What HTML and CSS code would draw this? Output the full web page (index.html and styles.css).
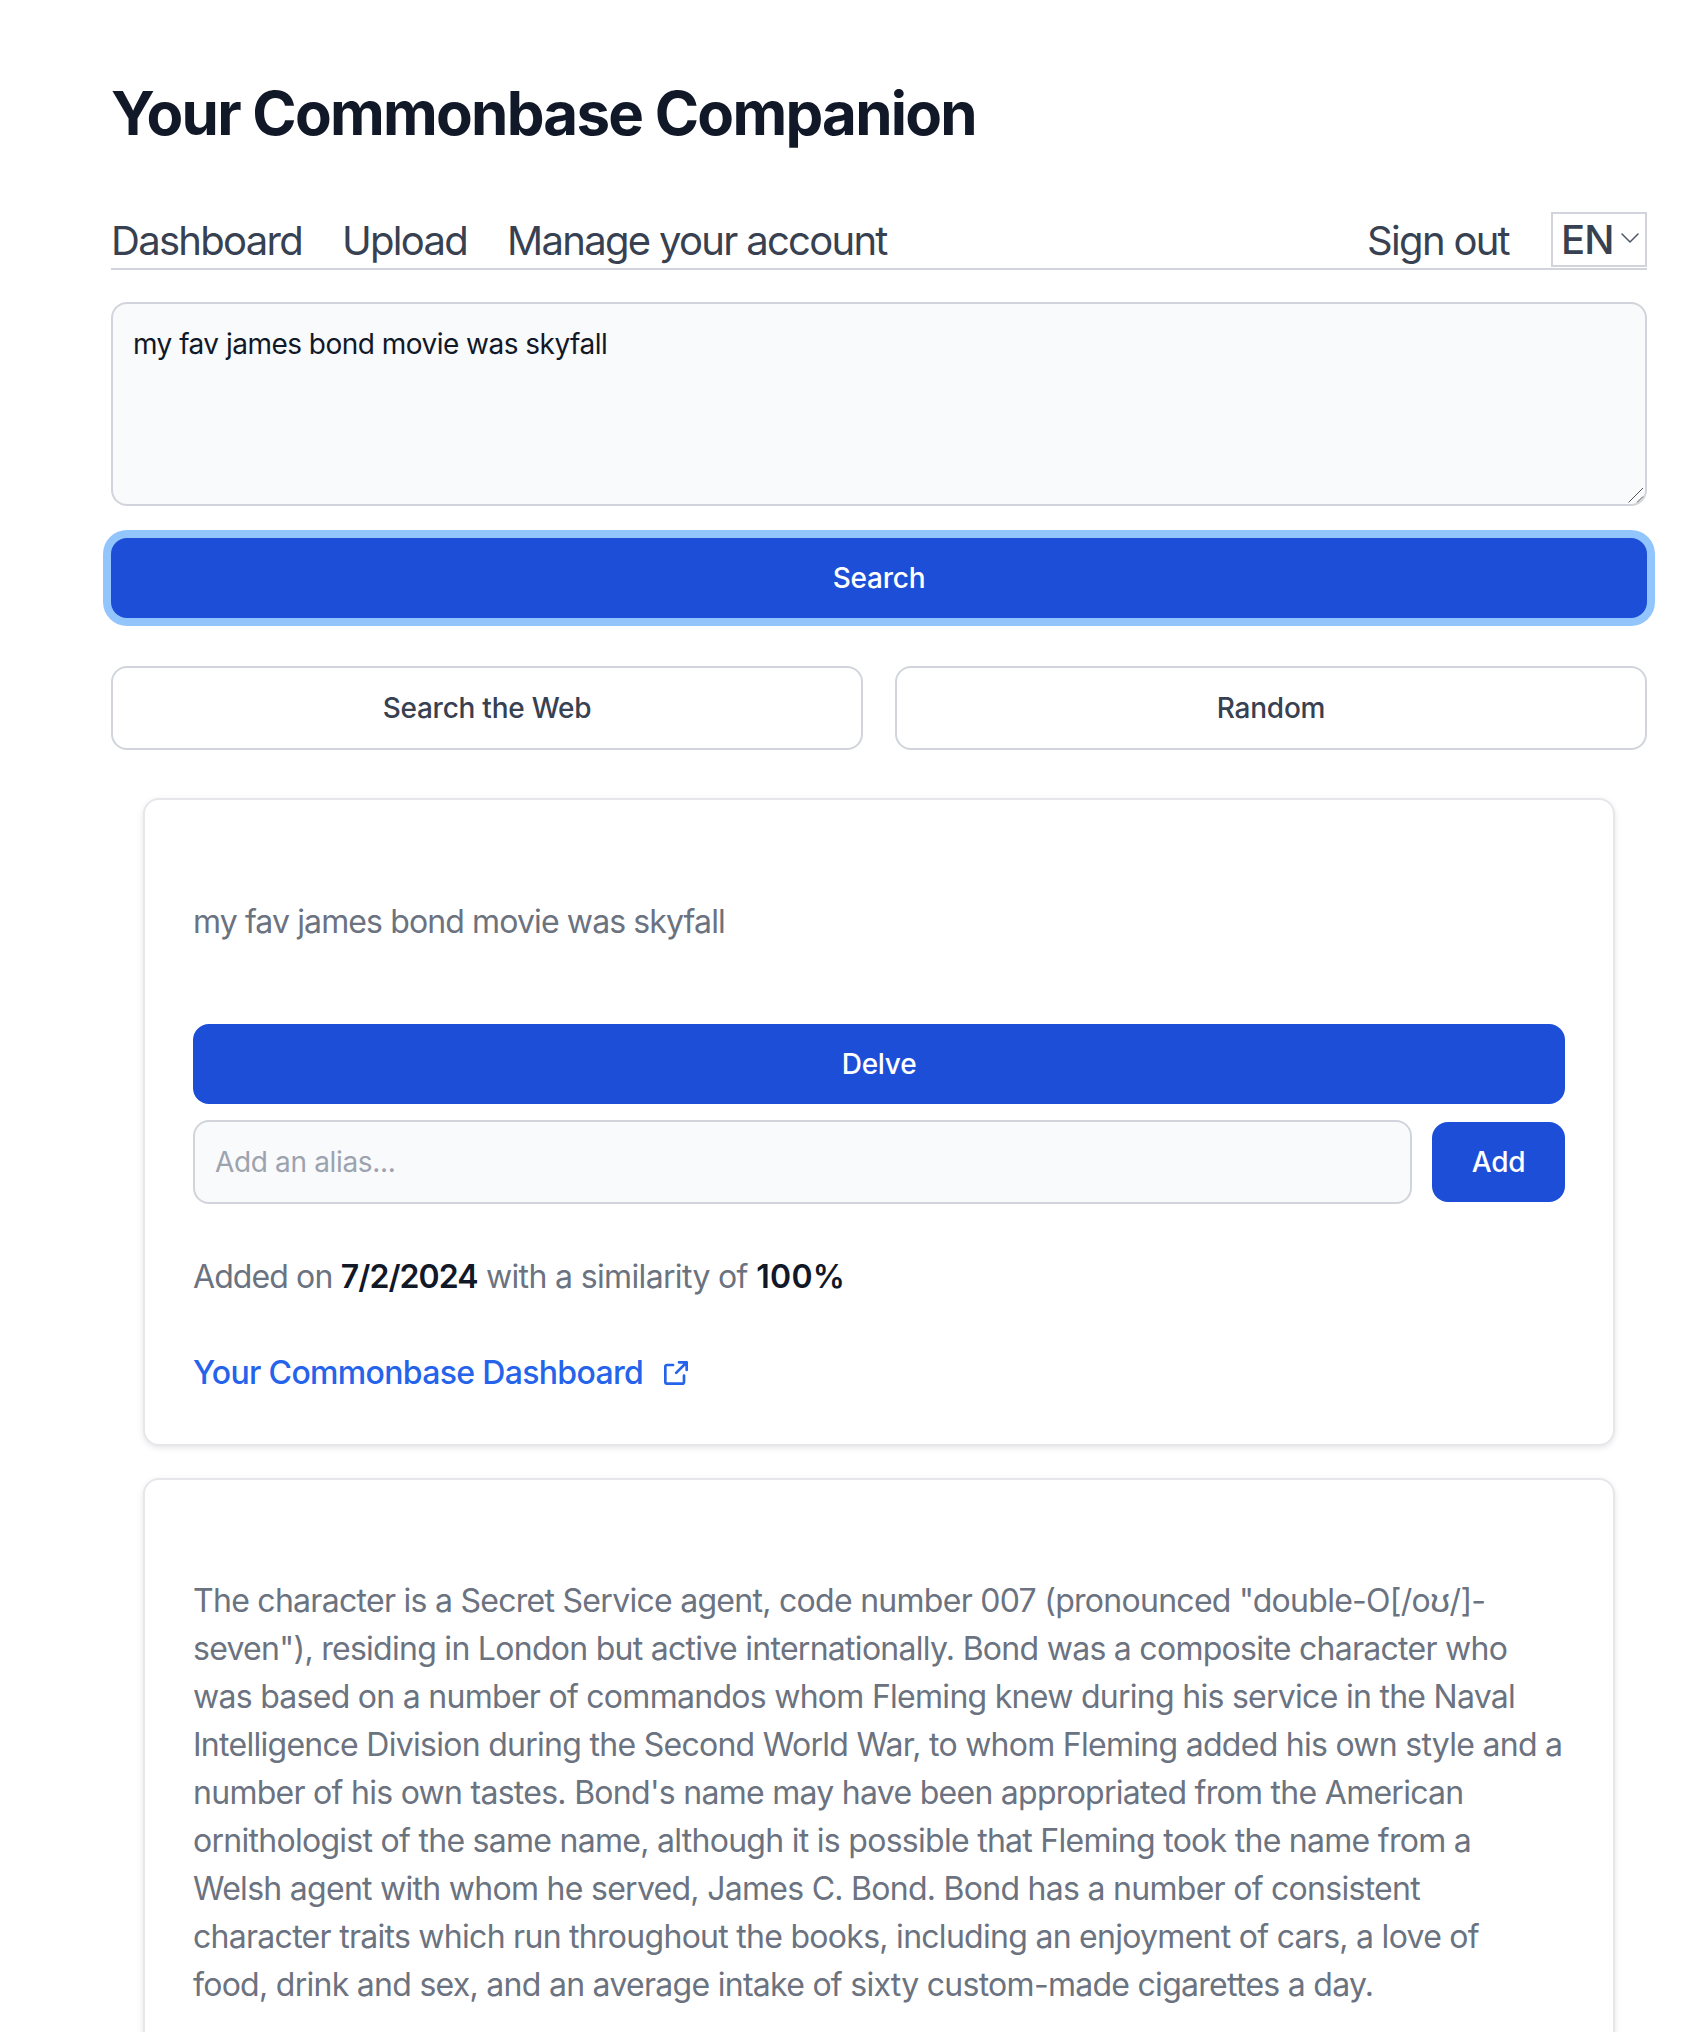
FILE: index.html
```html
<!DOCTYPE html>
<html lang="en">
<head>
    <meta charset="UTF-8">
    <meta name="viewport" content="width=device-width, initial-scale=1.0">
    <title>Your Commonbase Companion</title>
    <link rel="stylesheet" href="styles.css">
</head>
<body>
    <main class="page">
        <h1 class="page-title">Your Commonbase Companion</h1>

        <nav class="navbar">
            <div class="nav-links">
                <a href="#">Dashboard</a>
                <a href="#">Upload</a>
                <a href="#">Manage your account</a>
            </div>
            <div class="nav-links nav-right">
                <a href="#">Sign out</a>
                <div class="lang-select">
                    EN
                    <svg class="chevron" viewBox="0 0 18 10" fill="none" stroke="currentColor" stroke-width="1.5" stroke-linecap="round" stroke-linejoin="round">
                        <path d="M1 1l8 8 8-8"/>
                    </svg>
                </div>
            </div>
        </nav>

        <div class="search-wrap">
            <textarea class="search-box" rows="4">my fav james bond movie was skyfall</textarea>
            <svg class="resize-grip" viewBox="0 0 16 16" fill="none" stroke="#555" stroke-width="1">
                <path d="M0.5 15.5L15 1M9 15.5l6-6"/>
            </svg>
        </div>
        <button class="btn btn-primary btn-ring">Search</button>

        <div class="search-options">
            <button class="btn btn-outline">Search the Web</button>
            <button class="btn btn-outline">Random</button>
        </div>

        <section class="card">
            <p class="card-text note-text">my fav james bond movie was skyfall</p>
            <button class="btn btn-primary delve-btn">Delve</button>
            <div class="alias-row">
                <input class="alias-input" type="text" placeholder="Add an alias...">
                <button class="btn btn-primary add-btn">Add</button>
            </div>
            <p class="card-meta"><span class="meta-lead">Added on</span> <strong>7/2/2024</strong> with a similarity of <strong class="score">100%</strong></p>
            <a class="card-link" href="#">
                Your Commonbase Dashboard
                <svg class="link-icon" viewBox="0 0 18 18" fill="none" stroke="currentColor" stroke-width="2" stroke-linecap="round" stroke-linejoin="round">
                    <path d="M15 11v4.833A1.166 1.166 0 0 1 13.833 17H2.167A1.167 1.167 0 0 1 1 15.833V4.167A1.166 1.166 0 0 1 2.167 3h4.618m4.447-2H17v5.768M9.111 8.889l7.778-7.778"/>
                </svg>
            </a>
        </section>

        <section class="card">
            <p class="card-text">The character is a Secret Service agent, code number 007 (pronounced "double-O[/oʊ/]-seven"), residing in London but active internationally. Bond was a composite character who was based on a number of commandos whom Fleming knew during his service in the Naval Intelligence Division during the Second World War, to whom Fleming added his own style and a number of his own tastes. Bond's name may have been appropriated from the American ornithologist of the same name, although it is possible that Fleming took the name from a Welsh agent with whom he served, James C. Bond. Bond has a number of consistent character traits which run throughout the books, including an enjoyment of cars, a love of food,&nbsp;drink and sex, and an average intake of sixty custom-made cigarettes a day.</p>
        </section>
    </main>
</body>
</html>
```

FILE: styles.css
```css
* {
    margin: 0;
    padding: 0;
    box-sizing: border-box;
    font-family: Inter, "Noto Sans", sans-serif;
}

html, body {
    height: 2032px;
    overflow: hidden;
}

body {
    background: #fff;
    color: #111827;
}

.page {
    width: 1536px;
    margin-left: 111px;
    padding-top: 77px;
}

.page-title {
    font-size: 60px;
    line-height: 72px;
    font-weight: 700;
    letter-spacing: -1.75px;
    color: #111827;
    margin-bottom: 63px;
}

.navbar {
    display: flex;
    justify-content: space-between;
    align-items: flex-end;
    border-bottom: 2px solid #d1d5db;
    margin-bottom: 32px;
}

.nav-links {
    display: flex;
    align-items: flex-end;
    gap: 40px;
}

.nav-right {
    gap: 42px;
}

.nav-links a {
    color: #374151;
    text-decoration: none;
    font-size: 40px;
    line-height: 54px;
    letter-spacing: -1.7px;
}

.lang-select {
    width: 96px;
    height: 55px;
    margin-bottom: 1px;
    padding-left: 8px;
    border: 2px solid #d1d5db;
    display: flex;
    align-items: center;
    justify-content: space-between;
    color: #374151;
    font-size: 40px;
    font-weight: 500;
    letter-spacing: -0.8px;
}

.chevron {
    width: 18px;
    height: 10px;
    margin-right: 6px;
    margin-top: -4px;
    color: #4b5563;
}

.search-wrap {
    position: relative;
}

.search-box {
    display: block;
    width: 100%;
    padding: 20px;
    background: #f9fafb;
    border: 2px solid #d1d5db;
    border-radius: 16px;
    color: #111827;
    font-size: 28px;
    line-height: 40px;
    letter-spacing: -0.52px;
    outline: none;
    resize: none;
}

.resize-grip {
    position: absolute;
    right: 3px;
    bottom: 3px;
    width: 16px;
    height: 16px;
}

.btn {
    display: block;
    border: none;
    border-radius: 16px;
    font-size: 28px;
    line-height: 40px;
    font-weight: 500;
    letter-spacing: -0.25px;
    padding: 20px;
    cursor: pointer;
}

.btn-primary {
    background: #1d4ed8;
    color: #fff;
}

.btn-ring {
    width: 100%;
    margin-top: 32px;
    box-shadow: 0 0 0 8px #93c5fd;
}

.btn-outline {
    background: #fff;
    color: #374151;
    border: 2px solid #d1d5db;
}

.search-options {
    display: grid;
    grid-template-columns: 1fr 1fr;
    gap: 32px;
    margin-top: 48px;
}

.card {
    width: 1472px;
    margin: 48px 0 32px 32px;
    padding: 48px 48px 47px;
    background: #fff;
    border: 2px solid #e5e7eb;
    border-radius: 16px;
    box-shadow: 0 2px 6px rgba(0,0,0,0.1);
}

.card + .card {
    margin-top: 32px;
}

.card-text {
    margin: 49px 0 47px;
    color: #6b7280;
    font-size: 32px;
    line-height: 48px;
    letter-spacing: -0.72px;
}

.note-text {
    margin-top: 50px;
    letter-spacing: -0.88px;
}

.delve-btn {
    width: 100%;
    margin-top: 78px;
}

.alias-row {
    display: flex;
    align-items: center;
    gap: 20px;
    margin-top: 16px;
}

.alias-input {
    flex: 1;
    height: 84px;
    padding: 20px;
    background: #f9fafb;
    border: 2px solid #d1d5db;
    border-radius: 16px;
    font-size: 28px;
    line-height: 40px;
    letter-spacing: -0.35px;
    color: #111827;
    outline: none;
}

.alias-input::placeholder {
    color: #9ca3af;
}

.add-btn {
    width: 133px;
}

.card-meta {
    margin-top: 49px;
    color: #6b7280;
    font-size: 32px;
    line-height: 48px;
    letter-spacing: -0.65px;
}

.meta-lead {
    letter-spacing: -0.9px;
}

.card-meta strong {
    color: #111827;
    font-weight: 600;
    letter-spacing: -0.95px;
}

.card-meta .score {
    letter-spacing: 0.3px;
}

.card-link {
    display: flex;
    align-items: center;
    gap: 21px;
    margin-top: 48px;
    color: #2563eb;
    font-size: 32px;
    line-height: 48px;
    font-weight: 500;
    letter-spacing: -0.67px;
    text-decoration: none;
}

.link-icon {
    width: 24px;
    height: 24px;
}
```
